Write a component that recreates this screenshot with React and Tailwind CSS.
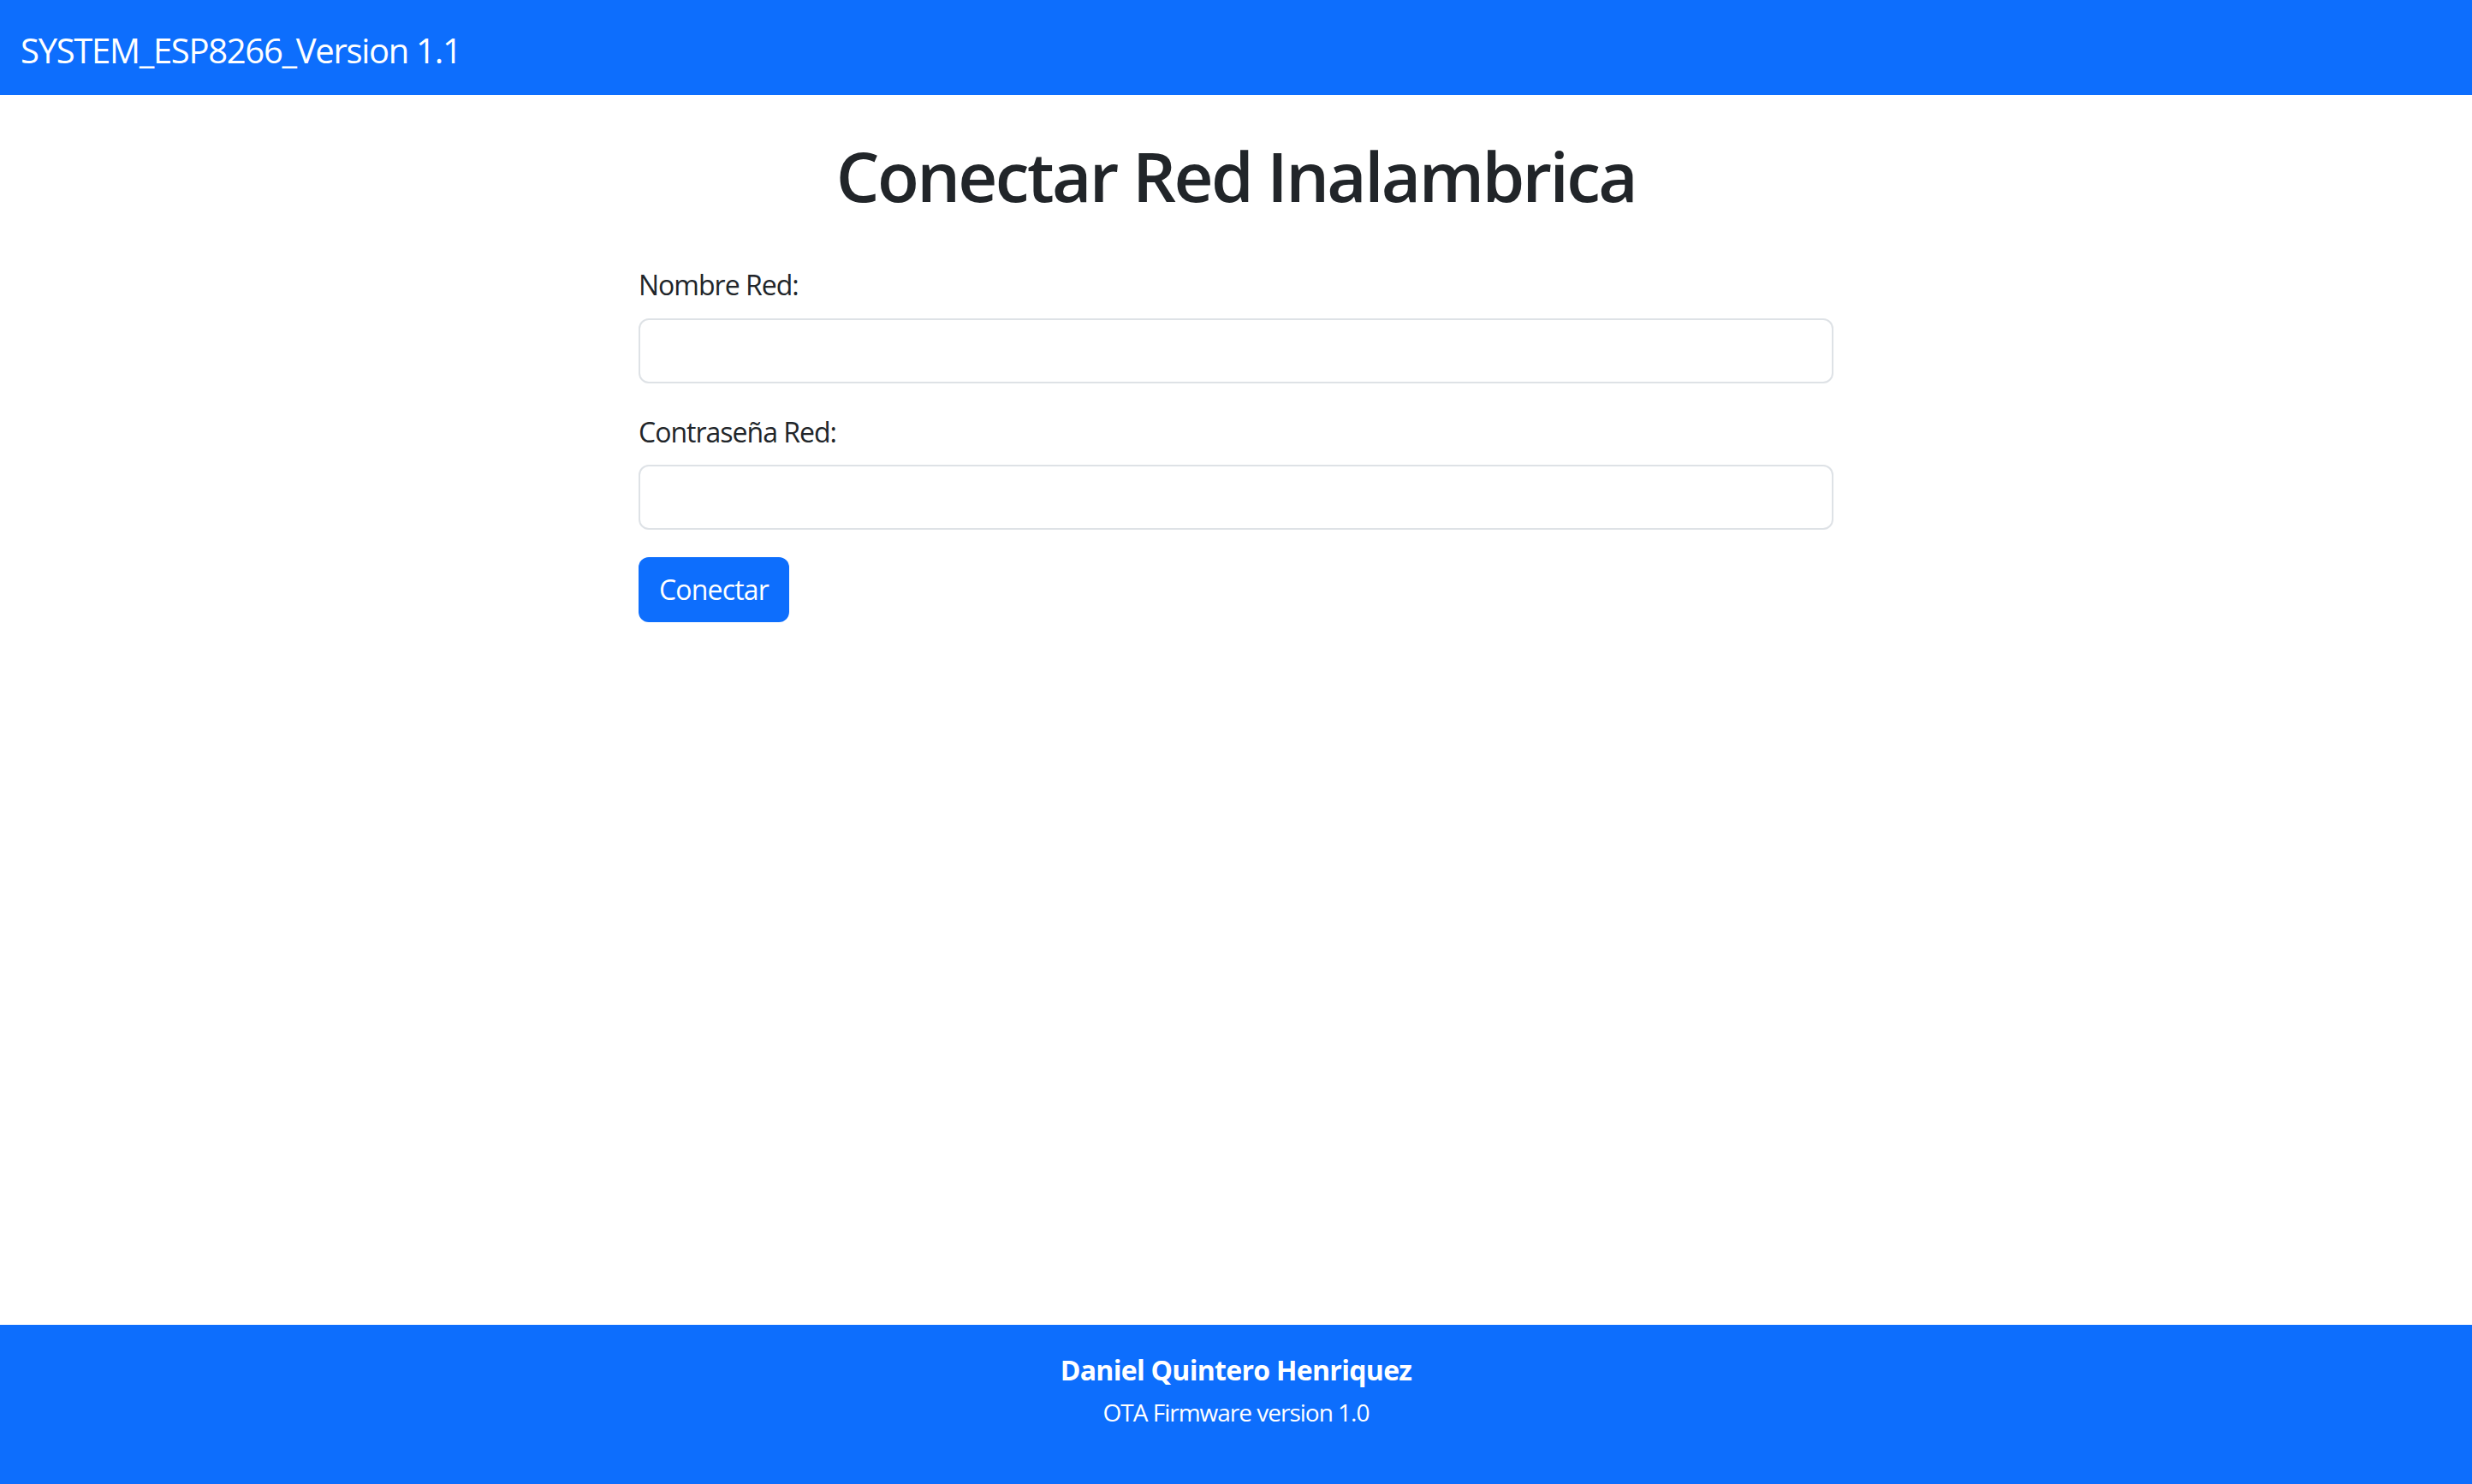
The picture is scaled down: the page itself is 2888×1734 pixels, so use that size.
export default function App() {
  return (
    <div className="min-h-screen flex flex-col bg-white text-[#212529]" style={{ fontFamily: '"Open Sans", "Noto Sans", sans-serif' }}>
      <nav className="h-[111px] bg-[#0d6efd] flex items-center px-[24px] pt-[6px]">
        <span className="text-[40px] leading-[60px] text-white tracking-[-1.3px]">SYSTEM_ESP8266_Version 1.1</span>
      </nav>
      <main className="flex-1">
        <div className="w-[1396px] mx-auto pt-[46px]">
          <h1 className="text-[80px] leading-[96px] font-semibold text-center tracking-[-2.6px]">Conectar Red Inalambrica</h1>
          <form className="mt-[56px]">
            <label className="block text-[32px] leading-[48px] mb-[15px] tracking-[-1px]">Nombre Red:</label>
            <input type="text" className="block w-full h-[76px] border-2 border-[#dee2e6] rounded-[12px] bg-white" />
            <label className="block text-[32px] leading-[48px] mt-[33px] mb-[14px] tracking-[-1px]">Contraseña Red:</label>
            <input type="password" className="block w-full h-[76px] border-2 border-[#dee2e6] rounded-[12px] bg-white" />
            <button type="button" className="mt-[32px] w-[176px] h-[76px] rounded-[12px] bg-[#0d6efd] text-white text-[32px] leading-[48px] tracking-[-0.8px] flex items-center justify-center">Conectar</button>
          </form>
        </div>
      </main>
      <footer className="h-[186px] bg-[#0d6efd] text-white text-center pt-[29px]">
        <div className="text-[32px] leading-[48px] font-bold tracking-[-0.7px]">Daniel Quintero Henriquez</div>
        <div className="text-[28px] leading-[42px] mt-[4px] tracking-[-1px]">OTA Firmware version 1.0</div>
      </footer>
    </div>
  );
}
